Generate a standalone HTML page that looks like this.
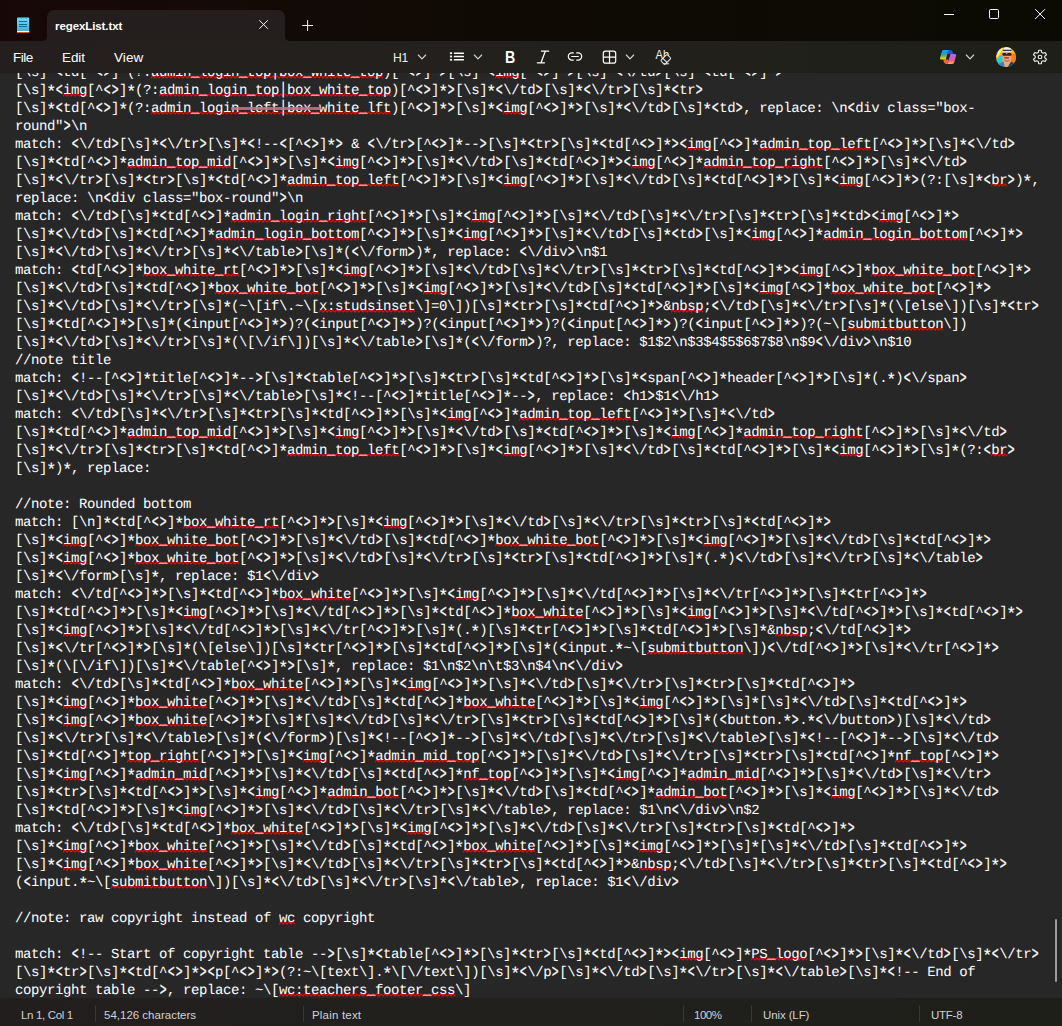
<!DOCTYPE html>
<html lang="en">
<head>
<meta charset="utf-8">
<title>regexList.txt - Notepad</title>
<style>
*{box-sizing:border-box;margin:0;padding:0}
html,body{width:1062px;height:1026px;overflow:hidden;background:#272727}
body{position:relative;font-family:"Liberation Sans",sans-serif;color:#fff}
#titlebar{position:absolute;left:0;top:0;width:1062px;height:41px;background:linear-gradient(90deg,#170807 0%,#120a06 30%,#0e0a04 60%,#0b0b03 100%)}
#tab{position:absolute;left:47px;top:10px;width:238px;height:31px;background:#241f1e;border-radius:7px 7px 0 0}
#tab:before,#tab:after{content:"";position:absolute;bottom:0;width:4px;height:4px}
#tab:before{left:-4px;background:radial-gradient(circle at 0 0,rgba(36,31,30,0) 3.5px,#241f1e 4.2px)}
#tab:after{right:-4px;background:radial-gradient(circle at 100% 0,rgba(36,31,30,0) 3.5px,#241f1e 4.2px)}
#tabtitle{position:absolute;left:8px;top:9px;font-size:11.5px;line-height:14px;font-weight:bold;letter-spacing:-0.09px;color:#fff;white-space:nowrap}
#menubar{position:absolute;left:0;top:41px;width:1062px;height:32px;background:linear-gradient(90deg,#241f1e 0%,#23201d 40%,#20201b 80%,#1f1f1a 100%)}
.mi{position:absolute;top:8px;font-size:13.5px;line-height:18px;color:#fff;white-space:nowrap}
#hdr{position:absolute;left:0;top:0;width:1062px;height:73px}
#editor{position:absolute;left:0;top:73px;width:1062px;height:925px;background:#272727;overflow:hidden}
#text{position:absolute;left:15px;top:-9px;font-family:"Liberation Mono","DejaVu Sans Mono",monospace;font-size:14px;letter-spacing:-0.4px;line-height:18px;color:#fff;text-rendering:geometricPrecision}
.ln{height:18px;white-space:pre}
.ln b{display:inline-block;width:8px;font-weight:normal;transform:scale(.82,1.25);transform-origin:50% 49%;-webkit-text-stroke:0.25px #fff}
.ln i{display:inline-block;width:8px;font-style:normal;transform:translateY(2px) scale(1.2);-webkit-text-stroke:0.15px #fff}
.ln s{display:inline-block;width:8px;text-decoration:none;transform:scaleY(1.22);transform-origin:50% 62%}
#sq{position:absolute;left:15px;top:-15px}
#status{position:absolute;left:0;top:998px;width:1062px;height:28px;background:linear-gradient(90deg,#221e1e 0%,#21201d 40%,#1f1f1b 80%,#1f1f1a 100%);font-size:11.5px;color:#d2d2d2}
#status span{position:absolute;top:10px;line-height:14px;white-space:nowrap}
#status i{position:absolute;top:8px;width:1px;height:16px;background:#3a3634}
#thumb{position:absolute;left:1055px;top:919px;width:2px;height:63px;background:#9b9b9b;border-radius:1px}
#pink{position:absolute;left:231px;top:107px;width:90px;height:3px;background:#cf6f86;opacity:.88;border-radius:1px}
</style>
</head>
<body>
<div id="titlebar">
  <div id="tab"><div id="tabtitle">regexList.txt</div></div>
</div>
<div id="menubar">
  <div class="mi" style="left:13px;letter-spacing:-0.5px">File</div>
  <div class="mi" style="left:62px;letter-spacing:-0.1px">Edit</div>
  <div class="mi" style="left:114px;letter-spacing:0.1px">View</div>
  <div class="mi" style="left:393px;letter-spacing:-0.2px;color:#eee;transform:scaleX(0.9);transform-origin:0 0">H1</div>
  <div class="mi" style="left:504.6px;top:6px;font-size:16.5px;line-height:20px;font-weight:bold;transform:scaleX(0.86);transform-origin:0 0">B</div>
</div>
<svg id="hdr" width="1062" height="73" viewBox="0 0 1062 73">
  <defs>
    <linearGradient id="npg" x1="0" y1="0" x2="0" y2="1"><stop offset="0" stop-color="#74d8f8"/><stop offset="1" stop-color="#42abd0"/></linearGradient>
    <linearGradient id="cpl" x1="0" y1="0" x2="0" y2="1"><stop offset="0" stop-color="#18a4ff"/><stop offset="0.3" stop-color="#1c98e0"/><stop offset="0.6" stop-color="#3cb878"/><stop offset="0.85" stop-color="#d8d018"/><stop offset="1" stop-color="#ffd800"/></linearGradient>
    <linearGradient id="cpr" x1="0" y1="0" x2="0" y2="1"><stop offset="0" stop-color="#b466ff"/><stop offset="0.35" stop-color="#d058c0"/><stop offset="0.65" stop-color="#f05a8c"/><stop offset="1" stop-color="#ffb25e"/></linearGradient>
    <clipPath id="avc"><circle cx="1006" cy="57.100" r="10"/></clipPath>
  </defs>
  <!-- notepad app icon -->
  <g>
    <rect x="17" y="17.6" width="12.2" height="15.4" rx="0.8" fill="url(#npg)"/>
    <rect x="17" y="31" width="12.2" height="1.1" fill="#f3f6f8"/>
    <rect x="17" y="32" width="12.2" height="1.1" fill="#c65a12"/>
    <path d="M18.200,18.300 v-1.400 h1.500 v1.400z M20.900,18.800 v-1.800 h1 v1.800z M23.200,18.300 v-1.400 h1.500 v1.400z M26,18.800 v-1.800 h1 v1.800z" fill="#1690bb"/>
    <path d="M19,21.5 h8 M19,24.5 h8 M19,26.5 h8" stroke="#006a8f" stroke-width="0.95" fill="none"/>
  </g>
  <!-- tab close / new tab -->
  <path d="M259.3,20.2 l8.6,8.6 M267.9,20.2 l-8.6,8.6" stroke="#f2f2f2" stroke-width="1" fill="none"/>
  <path d="M302.2,25.5 h10.8 M307.6,20.1 v10.8" stroke="#f2f2f2" stroke-width="1" fill="none"/>
  <!-- window controls -->
  <path d="M944,14.5 h10" stroke="#fff" stroke-width="1" fill="none"/>
  <rect x="989.5" y="9.5" width="9" height="9" rx="1.2" stroke="#fff" stroke-width="1" fill="none"/>
  <path d="M1035.2,9.2 l9.8,9.8 M1045,9.2 l-9.8,9.8" stroke="#fff" stroke-width="1" fill="none"/>
  <!-- chevrons -->
  <g stroke="#d8d8d8" stroke-width="1.1" fill="none" stroke-linecap="round" stroke-linejoin="round">
    <path d="M418.3,55 l3.7,3.8 l3.7,-3.8"/>
    <path d="M474.3,55 l3.7,3.8 l3.7,-3.8"/>
    <path d="M626.3,55 l3.7,3.8 l3.7,-3.8"/>
    <path d="M966.3,55 l3.7,3.8 l3.7,-3.8"/>
  </g>
  <!-- list icon -->
  <g fill="#fff">
    <rect x="449.9" y="52.3" width="2.2" height="1.8"/><rect x="453.8" y="52.4" width="10.2" height="1.6" rx="0.6"/>
    <rect x="449.9" y="55.6" width="2.2" height="1.8"/><rect x="453.8" y="55.7" width="10.2" height="1.6" rx="0.6"/>
    <rect x="449.9" y="58.9" width="2.2" height="1.8"/><rect x="453.8" y="59" width="10.2" height="1.6" rx="0.6"/>
  </g>
  <!-- italic I -->
  <path d="M541.5,51.2 h7.2 M537.3,62.8 h7.2 M545.3,51.2 l-4.3,11.6" stroke="#fff" stroke-width="1.25" fill="none" stroke-linecap="round"/>
  <!-- link -->
  <g stroke="#fff" stroke-width="1.2" fill="none" stroke-linecap="round">
    <path d="M573.3,52.9 H571.9 a3.6,3.6 0 0 0 0,7.2 H573.3"/>
    <path d="M576.7,52.9 H578.1 a3.6,3.6 0 0 1 0,7.2 H576.7"/>
    <path d="M571.6,56.5 H578.4"/>
  </g>
  <!-- table -->
  <g stroke="#fff" stroke-width="1.2" fill="none">
    <rect x="603.3" y="51.1" width="12.4" height="12.1" rx="2.2"/>
    <path d="M609.5,51.1 v12.1 M603.3,57.15 h12.4"/>
  </g>
  <!-- clear formatting icon -->
  <text x="655.6" y="59" font-family="Liberation Sans, sans-serif" font-size="12.5" fill="#f0f0f0" textLength="13.6" lengthAdjust="spacingAndGlyphs">Ab</text>
  <g transform="translate(665.8,59.5) rotate(-45)" stroke="#f4f4f4" stroke-width="1" stroke-linejoin="round">
    <rect x="-4.5" y="-2.9" width="9" height="5.800" rx="1.200" fill="#23201d"/>
    <path d="M-1.300,-2.900 v5.800" fill="none"/>
  </g>
  <path d="M664,63.800 h4.600" stroke="#f4f4f4" stroke-width="1" fill="none" stroke-linecap="round"/>
  <!-- copilot -->
  <g>
    <path d="M946,49.900 h3.800 c1.500,0 2.300,0.700 2.800,2 l0.700,2 h-5.500z" fill="#1c58dc"/>
    <path d="M943.2,59.500 h5.200 l-1.100,4.500 h-0.700 c-1.400,0 -2.200,-0.700 -2.700,-2z" fill="#f8642e"/>
    <path d="M943.500,49.900 h4.900 l-2.600,9.700 h-4.400 c-1.100,0 -1.600,-0.800 -1.300,-1.900 l1.700,-6 c0.300,-1.200 0.900,-1.800 1.700,-1.800z" fill="url(#cpl)"/>
    <path d="M950.600,53.900 h4.200 c1.100,0 1.600,0.800 1.300,1.900 l-1.700,6 c-0.400,1.400 -1.200,2.200 -2.400,2.200 h-4.700z" fill="url(#cpr)"/>
  </g>
  <!-- avatar -->
  <g clip-path="url(#avc)">
    <rect x="995" y="46" width="22" height="22" fill="#f7b81a"/>
    <path d="M996,56 l6,-8 l1.200,0.800 l-6.200,9z M997.500,52 l4,-5 l1,0.600 l-4,5.400z" fill="#fde6a0"/>
    <path d="M1011,55 l6,-3 v11.500 l-6,-1.500z" fill="#fb7a12"/>
    <path d="M1000.600,55 l2,1 v5.600 l-4.200,2 l-2.400,-3.200z" fill="#18cfe8"/>
    <path d="M997.500,64 l6.200,-2.400 l1.600,6.400 h-6z" fill="#2a86d8"/>
    <path d="M1011,61.500 l4,2 l-2.500,4.500 h-5.500z" fill="#123e80"/>
    <path d="M1003.600,61 h7.400 l-4,6.800 h-1.800z" fill="#f0a880"/>
    <rect x="1002.500" y="51.500" width="9" height="9.800" rx="3" fill="#e8a078"/>
    <path d="M1004.200,59.800 q2.700,1.800 5.600,0 l-0.300,1.300 q-2.500,1.500 -5,0z" fill="#9a6850"/>
    <path d="M1004.400,57.300 h4.500 v1.300 h-4.500z" fill="#8a3018"/>
    <path d="M1000.700,53.300 l2,-0.600 v1.300z" fill="#b8b0a8"/>
    <rect x="1002.300" y="53" width="9.300" height="2.800" rx="1.200" fill="#2a2030"/>
    <rect x="1006.100" y="53" width="1.300" height="1.200" fill="#e8a078"/>
    <path d="M1003,50.400 c0,-4.400 8.300,-4.400 8.300,0z" fill="#f4f4f2"/>
    <rect x="1002" y="50.900" width="10" height="1.100" rx="0.500" fill="#e8e0d8"/>
    <rect x="1002.800" y="49.700" width="8.700" height="1.300" fill="#2c3c4c"/>
  </g>
  <!-- settings gear -->
  <path d="M1041.60,52.37 L1041.32,50.23 L1038.68,50.23 L1038.40,52.37 L1036.79,53.30 L1034.79,52.47 L1033.48,54.75 L1035.19,56.07 L1035.19,57.93 L1033.48,59.25 L1034.79,61.53 L1036.79,60.70 L1038.40,61.63 L1038.68,63.77 L1041.32,63.77 L1041.60,61.63 L1043.21,60.70 L1045.21,61.53 L1046.52,59.25 L1044.81,57.93 L1044.81,56.07 L1046.52,54.75 L1045.21,52.47 L1043.21,53.30Z" stroke="#f0f0f0" stroke-width="1.1" fill="none" stroke-linejoin="round"/>
  <circle cx="1040" cy="57" r="1.800" stroke="#f0f0f0" stroke-width="1.100" fill="none"/>
</svg>
<div id="editor"><svg id="sq" width="1040" height="960" viewBox="0 0 1040 960"><defs><pattern id="zz" x="0" y="-9" width="4" height="18" patternUnits="userSpaceOnUse"><path d="M-1,12 L0,11 L2,9 L4,11 L5,10" fill="none" stroke="#ff0000" stroke-width="1.1"/></pattern></defs><g fill="url(#zz)"><rect x="136" y="16" width="232" height="5"/><rect x="480" y="16" width="24" height="5"/><rect x="48" y="34" width="24" height="5"/><rect x="144" y="34" width="232" height="5"/><rect x="136" y="52" width="240" height="5"/><rect x="488" y="52" width="24" height="5"/><rect x="672" y="88" width="24" height="5"/><rect x="744" y="88" width="112" height="5"/><rect x="112" y="106" width="104" height="5"/><rect x="320" y="106" width="24" height="5"/><rect x="616" y="106" width="24" height="5"/><rect x="688" y="106" width="120" height="5"/><rect x="272" y="124" width="112" height="5"/><rect x="488" y="124" width="24" height="5"/><rect x="824" y="124" width="24" height="5"/><rect x="976" y="124" width="16" height="5"/><rect x="216" y="160" width="136" height="5"/><rect x="456" y="160" width="24" height="5"/><rect x="864" y="160" width="24" height="5"/><rect x="200" y="178" width="144" height="5"/><rect x="448" y="178" width="24" height="5"/><rect x="736" y="178" width="24" height="5"/><rect x="808" y="178" width="144" height="5"/><rect x="128" y="214" width="96" height="5"/><rect x="328" y="214" width="24" height="5"/><rect x="784" y="214" width="24" height="5"/><rect x="856" y="214" width="104" height="5"/><rect x="200" y="232" width="104" height="5"/><rect x="408" y="232" width="24" height="5"/><rect x="744" y="232" width="24" height="5"/><rect x="816" y="232" width="104" height="5"/><rect x="304" y="250" width="96" height="5"/><rect x="656" y="250" width="32" height="5"/><rect x="832" y="268" width="96" height="5"/><rect x="432" y="358" width="24" height="5"/><rect x="504" y="358" width="112" height="5"/><rect x="112" y="376" width="104" height="5"/><rect x="320" y="376" width="24" height="5"/><rect x="656" y="376" width="24" height="5"/><rect x="728" y="376" width="120" height="5"/><rect x="272" y="394" width="112" height="5"/><rect x="488" y="394" width="24" height="5"/><rect x="824" y="394" width="24" height="5"/><rect x="976" y="394" width="16" height="5"/><rect x="168" y="466" width="96" height="5"/><rect x="368" y="466" width="24" height="5"/><rect x="48" y="484" width="24" height="5"/><rect x="120" y="484" width="104" height="5"/><rect x="480" y="484" width="104" height="5"/><rect x="688" y="484" width="24" height="5"/><rect x="48" y="502" width="24" height="5"/><rect x="120" y="502" width="104" height="5"/><rect x="264" y="538" width="72" height="5"/><rect x="440" y="538" width="24" height="5"/><rect x="168" y="556" width="24" height="5"/><rect x="496" y="556" width="72" height="5"/><rect x="672" y="556" width="24" height="5"/><rect x="48" y="574" width="24" height="5"/><rect x="760" y="574" width="32" height="5"/><rect x="632" y="592" width="96" height="5"/><rect x="216" y="628" width="72" height="5"/><rect x="392" y="628" width="24" height="5"/><rect x="48" y="646" width="24" height="5"/><rect x="120" y="646" width="72" height="5"/><rect x="448" y="646" width="72" height="5"/><rect x="624" y="646" width="24" height="5"/><rect x="48" y="664" width="24" height="5"/><rect x="120" y="664" width="72" height="5"/><rect x="112" y="700" width="72" height="5"/><rect x="288" y="700" width="24" height="5"/><rect x="360" y="700" width="104" height="5"/><rect x="880" y="700" width="48" height="5"/><rect x="48" y="718" width="24" height="5"/><rect x="120" y="718" width="72" height="5"/><rect x="448" y="718" width="48" height="5"/><rect x="600" y="718" width="24" height="5"/><rect x="672" y="718" width="72" height="5"/><rect x="240" y="736" width="24" height="5"/><rect x="312" y="736" width="72" height="5"/><rect x="640" y="736" width="72" height="5"/><rect x="816" y="736" width="24" height="5"/><rect x="168" y="754" width="24" height="5"/><rect x="216" y="772" width="72" height="5"/><rect x="392" y="772" width="24" height="5"/><rect x="48" y="790" width="24" height="5"/><rect x="120" y="790" width="72" height="5"/><rect x="448" y="790" width="72" height="5"/><rect x="624" y="790" width="24" height="5"/><rect x="48" y="808" width="24" height="5"/><rect x="120" y="808" width="72" height="5"/><rect x="624" y="808" width="32" height="5"/><rect x="96" y="826" width="96" height="5"/><rect x="264" y="862" width="16" height="5"/><rect x="664" y="898" width="24" height="5"/><rect x="736" y="898" width="56" height="5"/><rect x="264" y="934" width="176" height="5"/></g></svg><div id="text"><div class="ln">[\s]<i>*</i><b>&lt;</b>td[^<b>&lt;</b><b>&gt;</b>]<i>*</i>(?:admin_login_top<s>|</s>box_white_top)[^<b>&lt;</b><b>&gt;</b>]<i>*</i><b>&gt;</b>[\s]<i>*</i><b>&lt;</b>img[^<b>&lt;</b><b>&gt;</b>]<i>*</i><b>&gt;</b>[\s]<i>*</i><b>&lt;</b>\/td<b>&gt;</b>[\s]<i>*</i><b>&lt;</b>td[^<b>&lt;</b><b>&gt;</b>]<i>*</i><b>&gt;</b></div>
<div class="ln">[\s]<i>*</i><b>&lt;</b>img[^<b>&lt;</b><b>&gt;</b>]<i>*</i>(?:admin_login_top<s>|</s>box_white_top)[^<b>&lt;</b><b>&gt;</b>]<i>*</i><b>&gt;</b>[\s]<i>*</i><b>&lt;</b>\/td<b>&gt;</b>[\s]<i>*</i><b>&lt;</b>\/tr<b>&gt;</b>[\s]<i>*</i><b>&lt;</b>tr<b>&gt;</b></div>
<div class="ln">[\s]<i>*</i><b>&lt;</b>td[^<b>&lt;</b><b>&gt;</b>]<i>*</i>(?:admin_login_left<s>|</s>box_white_lft)[^<b>&lt;</b><b>&gt;</b>]<i>*</i><b>&gt;</b>[\s]<i>*</i><b>&lt;</b>img[^<b>&lt;</b><b>&gt;</b>]<i>*</i><b>&gt;</b>[\s]<i>*</i><b>&lt;</b>\/td<b>&gt;</b>[\s]<i>*</i><b>&lt;</b>td<b>&gt;</b>, replace: \n<b>&lt;</b>div class="box-</div>
<div class="ln">round"<b>&gt;</b>\n</div>
<div class="ln">match: <b>&lt;</b>\/td<b>&gt;</b>[\s]<i>*</i><b>&lt;</b>\/tr<b>&gt;</b>[\s]<i>*</i><b>&lt;</b>!--<b>&lt;</b>[^<b>&lt;</b><b>&gt;</b>]<i>*</i><b>&gt;</b> &amp; <b>&lt;</b>\/tr<b>&gt;</b>[^<b>&lt;</b><b>&gt;</b>]<i>*</i>--<b>&gt;</b>[\s]<i>*</i><b>&lt;</b>tr<b>&gt;</b>[\s]<i>*</i><b>&lt;</b>td[^<b>&lt;</b><b>&gt;</b>]<i>*</i><b>&gt;</b><b>&lt;</b>img[^<b>&lt;</b><b>&gt;</b>]<i>*</i>admin_top_left[^<b>&lt;</b><b>&gt;</b>]<i>*</i><b>&gt;</b>[\s]<i>*</i><b>&lt;</b>\/td<b>&gt;</b></div>
<div class="ln">[\s]<i>*</i><b>&lt;</b>td[^<b>&lt;</b><b>&gt;</b>]<i>*</i>admin_top_mid[^<b>&lt;</b><b>&gt;</b>]<i>*</i><b>&gt;</b>[\s]<i>*</i><b>&lt;</b>img[^<b>&lt;</b><b>&gt;</b>]<i>*</i><b>&gt;</b>[\s]<i>*</i><b>&lt;</b>\/td<b>&gt;</b>[\s]<i>*</i><b>&lt;</b>td[^<b>&lt;</b><b>&gt;</b>]<i>*</i><b>&gt;</b><b>&lt;</b>img[^<b>&lt;</b><b>&gt;</b>]<i>*</i>admin_top_right[^<b>&lt;</b><b>&gt;</b>]<i>*</i><b>&gt;</b>[\s]<i>*</i><b>&lt;</b>\/td<b>&gt;</b></div>
<div class="ln">[\s]<i>*</i><b>&lt;</b>\/tr<b>&gt;</b>[\s]<i>*</i><b>&lt;</b>tr<b>&gt;</b>[\s]<i>*</i><b>&lt;</b>td[^<b>&lt;</b><b>&gt;</b>]<i>*</i>admin_top_left[^<b>&lt;</b><b>&gt;</b>]<i>*</i><b>&gt;</b>[\s]<i>*</i><b>&lt;</b>img[^<b>&lt;</b><b>&gt;</b>]<i>*</i><b>&gt;</b>[\s]<i>*</i><b>&lt;</b>\/td<b>&gt;</b>[\s]<i>*</i><b>&lt;</b>td[^<b>&lt;</b><b>&gt;</b>]<i>*</i><b>&gt;</b>[\s]<i>*</i><b>&lt;</b>img[^<b>&lt;</b><b>&gt;</b>]<i>*</i><b>&gt;</b>(?:[\s]<i>*</i><b>&lt;</b>br<b>&gt;</b>)<i>*</i>,</div>
<div class="ln">replace: \n<b>&lt;</b>div class="box-round"<b>&gt;</b>\n</div>
<div class="ln">match: <b>&lt;</b>\/td<b>&gt;</b>[\s]<i>*</i><b>&lt;</b>td[^<b>&lt;</b><b>&gt;</b>]<i>*</i>admin_login_right[^<b>&lt;</b><b>&gt;</b>]<i>*</i><b>&gt;</b>[\s]<i>*</i><b>&lt;</b>img[^<b>&lt;</b><b>&gt;</b>]<i>*</i><b>&gt;</b>[\s]<i>*</i><b>&lt;</b>\/td<b>&gt;</b>[\s]<i>*</i><b>&lt;</b>\/tr<b>&gt;</b>[\s]<i>*</i><b>&lt;</b>tr<b>&gt;</b>[\s]<i>*</i><b>&lt;</b>td<b>&gt;</b><b>&lt;</b>img[^<b>&lt;</b><b>&gt;</b>]<i>*</i><b>&gt;</b></div>
<div class="ln">[\s]<i>*</i><b>&lt;</b>\/td<b>&gt;</b>[\s]<i>*</i><b>&lt;</b>td[^<b>&lt;</b><b>&gt;</b>]<i>*</i>admin_login_bottom[^<b>&lt;</b><b>&gt;</b>]<i>*</i><b>&gt;</b>[\s]<i>*</i><b>&lt;</b>img[^<b>&lt;</b><b>&gt;</b>]<i>*</i><b>&gt;</b>[\s]<i>*</i><b>&lt;</b>\/td<b>&gt;</b>[\s]<i>*</i><b>&lt;</b>td<b>&gt;</b>[\s]<i>*</i><b>&lt;</b>img[^<b>&lt;</b><b>&gt;</b>]<i>*</i>admin_login_bottom[^<b>&lt;</b><b>&gt;</b>]<i>*</i><b>&gt;</b></div>
<div class="ln">[\s]<i>*</i><b>&lt;</b>\/td<b>&gt;</b>[\s]<i>*</i><b>&lt;</b>\/tr<b>&gt;</b>[\s]<i>*</i><b>&lt;</b>\/table<b>&gt;</b>[\s]<i>*</i>(<b>&lt;</b>\/form<b>&gt;</b>)<i>*</i>, replace: <b>&lt;</b>\/div<b>&gt;</b>\n$1</div>
<div class="ln">match: <b>&lt;</b>td[^<b>&lt;</b><b>&gt;</b>]<i>*</i>box_white_rt[^<b>&lt;</b><b>&gt;</b>]<i>*</i><b>&gt;</b>[\s]<i>*</i><b>&lt;</b>img[^<b>&lt;</b><b>&gt;</b>]<i>*</i><b>&gt;</b>[\s]<i>*</i><b>&lt;</b>\/td<b>&gt;</b>[\s]<i>*</i><b>&lt;</b>\/tr<b>&gt;</b>[\s]<i>*</i><b>&lt;</b>tr<b>&gt;</b>[\s]<i>*</i><b>&lt;</b>td[^<b>&lt;</b><b>&gt;</b>]<i>*</i><b>&gt;</b><b>&lt;</b>img[^<b>&lt;</b><b>&gt;</b>]<i>*</i>box_white_bot[^<b>&lt;</b><b>&gt;</b>]<i>*</i><b>&gt;</b></div>
<div class="ln">[\s]<i>*</i><b>&lt;</b>\/td<b>&gt;</b>[\s]<i>*</i><b>&lt;</b>td[^<b>&lt;</b><b>&gt;</b>]<i>*</i>box_white_bot[^<b>&lt;</b><b>&gt;</b>]<i>*</i><b>&gt;</b>[\s]<i>*</i><b>&lt;</b>img[^<b>&lt;</b><b>&gt;</b>]<i>*</i><b>&gt;</b>[\s]<i>*</i><b>&lt;</b>\/td<b>&gt;</b>[\s]<i>*</i><b>&lt;</b>td[^<b>&lt;</b><b>&gt;</b>]<i>*</i><b>&gt;</b>[\s]<i>*</i><b>&lt;</b>img[^<b>&lt;</b><b>&gt;</b>]<i>*</i>box_white_bot[^<b>&lt;</b><b>&gt;</b>]<i>*</i><b>&gt;</b></div>
<div class="ln">[\s]<i>*</i><b>&lt;</b>\/td<b>&gt;</b>[\s]<i>*</i><b>&lt;</b>\/tr<b>&gt;</b>[\s]<i>*</i>(~\[if\.~\[x:studsinset\]=0\])[\s]<i>*</i><b>&lt;</b>tr<b>&gt;</b>[\s]<i>*</i><b>&lt;</b>td[^<b>&lt;</b><b>&gt;</b>]<i>*</i><b>&gt;</b>&amp;nbsp;<b>&lt;</b>\/td<b>&gt;</b>[\s]<i>*</i><b>&lt;</b>\/tr<b>&gt;</b>[\s]<i>*</i>(\[else\])[\s]<i>*</i><b>&lt;</b>tr<b>&gt;</b></div>
<div class="ln">[\s]<i>*</i><b>&lt;</b>td[^<b>&lt;</b><b>&gt;</b>]<i>*</i><b>&gt;</b>[\s]<i>*</i>(<b>&lt;</b>input[^<b>&lt;</b><b>&gt;</b>]<i>*</i><b>&gt;</b>)?(<b>&lt;</b>input[^<b>&lt;</b><b>&gt;</b>]<i>*</i><b>&gt;</b>)?(<b>&lt;</b>input[^<b>&lt;</b><b>&gt;</b>]<i>*</i><b>&gt;</b>)?(<b>&lt;</b>input[^<b>&lt;</b><b>&gt;</b>]<i>*</i><b>&gt;</b>)?(<b>&lt;</b>input[^<b>&lt;</b><b>&gt;</b>]<i>*</i><b>&gt;</b>)?(~\[submitbutton\])</div>
<div class="ln">[\s]<i>*</i><b>&lt;</b>\/td<b>&gt;</b>[\s]<i>*</i><b>&lt;</b>\/tr<b>&gt;</b>[\s]<i>*</i>(\[\/if\])[\s]<i>*</i><b>&lt;</b>\/table<b>&gt;</b>[\s]<i>*</i>(<b>&lt;</b>\/form<b>&gt;</b>)?, replace: $1$2\n$3$4$5$6$7$8\n$9<b>&lt;</b>\/div<b>&gt;</b>\n$10</div>
<div class="ln">//note title</div>
<div class="ln">match: <b>&lt;</b>!--[^<b>&lt;</b><b>&gt;</b>]<i>*</i>title[^<b>&lt;</b><b>&gt;</b>]<i>*</i>--<b>&gt;</b>[\s]<i>*</i><b>&lt;</b>table[^<b>&lt;</b><b>&gt;</b>]<i>*</i><b>&gt;</b>[\s]<i>*</i><b>&lt;</b>tr<b>&gt;</b>[\s]<i>*</i><b>&lt;</b>td[^<b>&lt;</b><b>&gt;</b>]<i>*</i><b>&gt;</b>[\s]<i>*</i><b>&lt;</b>span[^<b>&lt;</b><b>&gt;</b>]<i>*</i>header[^<b>&lt;</b><b>&gt;</b>]<i>*</i><b>&gt;</b>[\s]<i>*</i>(.<i>*</i>)<b>&lt;</b>\/span<b>&gt;</b></div>
<div class="ln">[\s]<i>*</i><b>&lt;</b>\/td<b>&gt;</b>[\s]<i>*</i><b>&lt;</b>\/tr<b>&gt;</b>[\s]<i>*</i><b>&lt;</b>\/table<b>&gt;</b>[\s]<i>*</i><b>&lt;</b>!--[^<b>&lt;</b><b>&gt;</b>]<i>*</i>title[^<b>&lt;</b><b>&gt;</b>]<i>*</i>--<b>&gt;</b>, replace: <b>&lt;</b>h1<b>&gt;</b>$1<b>&lt;</b>\/h1<b>&gt;</b></div>
<div class="ln">match: <b>&lt;</b>\/td<b>&gt;</b>[\s]<i>*</i><b>&lt;</b>\/tr<b>&gt;</b>[\s]<i>*</i><b>&lt;</b>tr<b>&gt;</b>[\s]<i>*</i><b>&lt;</b>td[^<b>&lt;</b><b>&gt;</b>]<i>*</i><b>&gt;</b>[\s]<i>*</i><b>&lt;</b>img[^<b>&lt;</b><b>&gt;</b>]<i>*</i>admin_top_left[^<b>&lt;</b><b>&gt;</b>]<i>*</i><b>&gt;</b>[\s]<i>*</i><b>&lt;</b>\/td<b>&gt;</b></div>
<div class="ln">[\s]<i>*</i><b>&lt;</b>td[^<b>&lt;</b><b>&gt;</b>]<i>*</i>admin_top_mid[^<b>&lt;</b><b>&gt;</b>]<i>*</i><b>&gt;</b>[\s]<i>*</i><b>&lt;</b>img[^<b>&lt;</b><b>&gt;</b>]<i>*</i><b>&gt;</b>[\s]<i>*</i><b>&lt;</b>\/td<b>&gt;</b>[\s]<i>*</i><b>&lt;</b>td[^<b>&lt;</b><b>&gt;</b>]<i>*</i><b>&gt;</b>[\s]<i>*</i><b>&lt;</b>img[^<b>&lt;</b><b>&gt;</b>]<i>*</i>admin_top_right[^<b>&lt;</b><b>&gt;</b>]<i>*</i><b>&gt;</b>[\s]<i>*</i><b>&lt;</b>\/td<b>&gt;</b></div>
<div class="ln">[\s]<i>*</i><b>&lt;</b>\/tr<b>&gt;</b>[\s]<i>*</i><b>&lt;</b>tr<b>&gt;</b>[\s]<i>*</i><b>&lt;</b>td[^<b>&lt;</b><b>&gt;</b>]<i>*</i>admin_top_left[^<b>&lt;</b><b>&gt;</b>]<i>*</i><b>&gt;</b>[\s]<i>*</i><b>&lt;</b>img[^<b>&lt;</b><b>&gt;</b>]<i>*</i><b>&gt;</b>[\s]<i>*</i><b>&lt;</b>\/td<b>&gt;</b>[\s]<i>*</i><b>&lt;</b>td[^<b>&lt;</b><b>&gt;</b>]<i>*</i><b>&gt;</b>[\s]<i>*</i><b>&lt;</b>img[^<b>&lt;</b><b>&gt;</b>]<i>*</i><b>&gt;</b>[\s]<i>*</i>(?:<b>&lt;</b>br<b>&gt;</b></div>
<div class="ln">[\s]<i>*</i>)<i>*</i>, replace: </div>
<div class="ln">&nbsp;</div>
<div class="ln">//note: Rounded bottom</div>
<div class="ln">match: [\n]<i>*</i><b>&lt;</b>td[^<b>&lt;</b><b>&gt;</b>]<i>*</i>box_white_rt[^<b>&lt;</b><b>&gt;</b>]<i>*</i><b>&gt;</b>[\s]<i>*</i><b>&lt;</b>img[^<b>&lt;</b><b>&gt;</b>]<i>*</i><b>&gt;</b>[\s]<i>*</i><b>&lt;</b>\/td<b>&gt;</b>[\s]<i>*</i><b>&lt;</b>\/tr<b>&gt;</b>[\s]<i>*</i><b>&lt;</b>tr<b>&gt;</b>[\s]<i>*</i><b>&lt;</b>td[^<b>&lt;</b><b>&gt;</b>]<i>*</i><b>&gt;</b></div>
<div class="ln">[\s]<i>*</i><b>&lt;</b>img[^<b>&lt;</b><b>&gt;</b>]<i>*</i>box_white_bot[^<b>&lt;</b><b>&gt;</b>]<i>*</i><b>&gt;</b>[\s]<i>*</i><b>&lt;</b>\/td<b>&gt;</b>[\s]<i>*</i><b>&lt;</b>td[^<b>&lt;</b><b>&gt;</b>]<i>*</i>box_white_bot[^<b>&lt;</b><b>&gt;</b>]<i>*</i><b>&gt;</b>[\s]<i>*</i><b>&lt;</b>img[^<b>&lt;</b><b>&gt;</b>]<i>*</i><b>&gt;</b>[\s]<i>*</i><b>&lt;</b>\/td<b>&gt;</b>[\s]<i>*</i><b>&lt;</b>td[^<b>&lt;</b><b>&gt;</b>]<i>*</i><b>&gt;</b></div>
<div class="ln">[\s]<i>*</i><b>&lt;</b>img[^<b>&lt;</b><b>&gt;</b>]<i>*</i>box_white_bot[^<b>&lt;</b><b>&gt;</b>]<i>*</i><b>&gt;</b>[\s]<i>*</i><b>&lt;</b>\/td<b>&gt;</b>[\s]<i>*</i><b>&lt;</b>\/tr<b>&gt;</b>[\s]<i>*</i><b>&lt;</b>tr<b>&gt;</b>[\s]<i>*</i><b>&lt;</b>td[^<b>&lt;</b><b>&gt;</b>]<i>*</i><b>&gt;</b>[\s]<i>*</i>(.<i>*</i>)<b>&lt;</b>\/td<b>&gt;</b>[\s]<i>*</i><b>&lt;</b>\/tr<b>&gt;</b>[\s]<i>*</i><b>&lt;</b>\/table<b>&gt;</b></div>
<div class="ln">[\s]<i>*</i><b>&lt;</b>\/form<b>&gt;</b>[\s]<i>*</i>, replace: $1<b>&lt;</b>\/div<b>&gt;</b></div>
<div class="ln">match: <b>&lt;</b>\/td[^<b>&lt;</b><b>&gt;</b>]<i>*</i><b>&gt;</b>[\s]<i>*</i><b>&lt;</b>td[^<b>&lt;</b><b>&gt;</b>]<i>*</i>box_white[^<b>&lt;</b><b>&gt;</b>]<i>*</i><b>&gt;</b>[\s]<i>*</i><b>&lt;</b>img[^<b>&lt;</b><b>&gt;</b>]<i>*</i><b>&gt;</b>[\s]<i>*</i><b>&lt;</b>\/td[^<b>&lt;</b><b>&gt;</b>]<i>*</i><b>&gt;</b>[\s]<i>*</i><b>&lt;</b>\/tr[^<b>&lt;</b><b>&gt;</b>]<i>*</i><b>&gt;</b>[\s]<i>*</i><b>&lt;</b>tr[^<b>&lt;</b><b>&gt;</b>]<i>*</i><b>&gt;</b></div>
<div class="ln">[\s]<i>*</i><b>&lt;</b>td[^<b>&lt;</b><b>&gt;</b>]<i>*</i><b>&gt;</b>[\s]<i>*</i><b>&lt;</b>img[^<b>&lt;</b><b>&gt;</b>]<i>*</i><b>&gt;</b>[\s]<i>*</i><b>&lt;</b>\/td[^<b>&lt;</b><b>&gt;</b>]<i>*</i><b>&gt;</b>[\s]<i>*</i><b>&lt;</b>td[^<b>&lt;</b><b>&gt;</b>]<i>*</i>box_white[^<b>&lt;</b><b>&gt;</b>]<i>*</i><b>&gt;</b>[\s]<i>*</i><b>&lt;</b>img[^<b>&lt;</b><b>&gt;</b>]<i>*</i><b>&gt;</b>[\s]<i>*</i><b>&lt;</b>\/td[^<b>&lt;</b><b>&gt;</b>]<i>*</i><b>&gt;</b>[\s]<i>*</i><b>&lt;</b>td[^<b>&lt;</b><b>&gt;</b>]<i>*</i><b>&gt;</b></div>
<div class="ln">[\s]<i>*</i><b>&lt;</b>img[^<b>&lt;</b><b>&gt;</b>]<i>*</i><b>&gt;</b>[\s]<i>*</i><b>&lt;</b>\/td[^<b>&lt;</b><b>&gt;</b>]<i>*</i><b>&gt;</b>[\s]<i>*</i><b>&lt;</b>\/tr[^<b>&lt;</b><b>&gt;</b>]<i>*</i><b>&gt;</b>[\s]<i>*</i>(.<i>*</i>)[\s]<i>*</i><b>&lt;</b>tr[^<b>&lt;</b><b>&gt;</b>]<i>*</i><b>&gt;</b>[\s]<i>*</i><b>&lt;</b>td[^<b>&lt;</b><b>&gt;</b>]<i>*</i><b>&gt;</b>[\s]<i>*</i>&amp;nbsp;<b>&lt;</b>\/td[^<b>&lt;</b><b>&gt;</b>]<i>*</i><b>&gt;</b></div>
<div class="ln">[\s]<i>*</i><b>&lt;</b>\/tr[^<b>&lt;</b><b>&gt;</b>]<i>*</i><b>&gt;</b>[\s]<i>*</i>(\[else\])[\s]<i>*</i><b>&lt;</b>tr[^<b>&lt;</b><b>&gt;</b>]<i>*</i><b>&gt;</b>[\s]<i>*</i><b>&lt;</b>td[^<b>&lt;</b><b>&gt;</b>]<i>*</i><b>&gt;</b>[\s]<i>*</i>(<b>&lt;</b>input.<i>*</i>~\[submitbutton\])<b>&lt;</b>\/td[^<b>&lt;</b><b>&gt;</b>]<i>*</i><b>&gt;</b>[\s]<i>*</i><b>&lt;</b>\/tr[^<b>&lt;</b><b>&gt;</b>]<i>*</i><b>&gt;</b></div>
<div class="ln">[\s]<i>*</i>(\[\/if\])[\s]<i>*</i><b>&lt;</b>\/table[^<b>&lt;</b><b>&gt;</b>]<i>*</i><b>&gt;</b>[\s]<i>*</i>, replace: $1\n$2\n\t$3\n$4\n<b>&lt;</b>\/div<b>&gt;</b></div>
<div class="ln">match: <b>&lt;</b>\/td<b>&gt;</b>[\s]<i>*</i><b>&lt;</b>td[^<b>&lt;</b><b>&gt;</b>]<i>*</i>box_white[^<b>&lt;</b><b>&gt;</b>]<i>*</i><b>&gt;</b>[\s]<i>*</i><b>&lt;</b>img[^<b>&lt;</b><b>&gt;</b>]<i>*</i><b>&gt;</b>[\s]<i>*</i><b>&lt;</b>\/td<b>&gt;</b>[\s]<i>*</i><b>&lt;</b>\/tr<b>&gt;</b>[\s]<i>*</i><b>&lt;</b>tr<b>&gt;</b>[\s]<i>*</i><b>&lt;</b>td[^<b>&lt;</b><b>&gt;</b>]<i>*</i><b>&gt;</b></div>
<div class="ln">[\s]<i>*</i><b>&lt;</b>img[^<b>&lt;</b><b>&gt;</b>]<i>*</i>box_white[^<b>&lt;</b><b>&gt;</b>]<i>*</i><b>&gt;</b>[\s]<i>*</i><b>&lt;</b>\/td<b>&gt;</b>[\s]<i>*</i><b>&lt;</b>td[^<b>&lt;</b><b>&gt;</b>]<i>*</i>box_white[^<b>&lt;</b><b>&gt;</b>]<i>*</i><b>&gt;</b>[\s]<i>*</i><b>&lt;</b>img[^<b>&lt;</b><b>&gt;</b>]<i>*</i><b>&gt;</b>[\s]<i>*</i>[\s]<i>*</i><b>&lt;</b>\/td<b>&gt;</b>[\s]<i>*</i><b>&lt;</b>td[^<b>&lt;</b><b>&gt;</b>]<i>*</i><b>&gt;</b></div>
<div class="ln">[\s]<i>*</i><b>&lt;</b>img[^<b>&lt;</b><b>&gt;</b>]<i>*</i>box_white[^<b>&lt;</b><b>&gt;</b>]<i>*</i><b>&gt;</b>[\s]<i>*</i>[\s]<i>*</i><b>&lt;</b>\/td<b>&gt;</b>[\s]<i>*</i><b>&lt;</b>\/tr<b>&gt;</b>[\s]<i>*</i><b>&lt;</b>tr<b>&gt;</b>[\s]<i>*</i><b>&lt;</b>td[^<b>&lt;</b><b>&gt;</b>]<i>*</i><b>&gt;</b>[\s]<i>*</i>(<b>&lt;</b>button.<i>*</i><b>&gt;</b>.<i>*</i><b>&lt;</b>\/button<b>&gt;</b>)[\s]<i>*</i><b>&lt;</b>\/td<b>&gt;</b></div>
<div class="ln">[\s]<i>*</i><b>&lt;</b>\/tr<b>&gt;</b>[\s]<i>*</i><b>&lt;</b>\/table<b>&gt;</b>[\s]<i>*</i>(<b>&lt;</b>\/form<b>&gt;</b>)[\s]<i>*</i><b>&lt;</b>!--[^<b>&lt;</b><b>&gt;</b>]<i>*</i>--<b>&gt;</b>[\s]<i>*</i><b>&lt;</b>\/td<b>&gt;</b>[\s]<i>*</i><b>&lt;</b>\/tr<b>&gt;</b>[\s]<i>*</i><b>&lt;</b>\/table<b>&gt;</b>[\s]<i>*</i><b>&lt;</b>!--[^<b>&lt;</b><b>&gt;</b>]<i>*</i>--<b>&gt;</b>[\s]<i>*</i><b>&lt;</b>\/td<b>&gt;</b></div>
<div class="ln">[\s]<i>*</i><b>&lt;</b>td[^<b>&lt;</b><b>&gt;</b>]<i>*</i>top_right[^<b>&lt;</b><b>&gt;</b>]<i>*</i><b>&gt;</b>[\s]<i>*</i><b>&lt;</b>img[^<b>&lt;</b><b>&gt;</b>]<i>*</i>admin_mid_top[^<b>&lt;</b><b>&gt;</b>]<i>*</i><b>&gt;</b>[\s]<i>*</i><b>&lt;</b>\/td<b>&gt;</b>[\s]<i>*</i><b>&lt;</b>\/tr<b>&gt;</b>[\s]<i>*</i><b>&lt;</b>tr<b>&gt;</b>[\s]<i>*</i><b>&lt;</b>td[^<b>&lt;</b><b>&gt;</b>]<i>*</i>nf_top[^<b>&lt;</b><b>&gt;</b>]<i>*</i><b>&gt;</b></div>
<div class="ln">[\s]<i>*</i><b>&lt;</b>img[^<b>&lt;</b><b>&gt;</b>]<i>*</i>admin_mid[^<b>&lt;</b><b>&gt;</b>]<i>*</i><b>&gt;</b>[\s]<i>*</i><b>&lt;</b>\/td<b>&gt;</b>[\s]<i>*</i><b>&lt;</b>td[^<b>&lt;</b><b>&gt;</b>]<i>*</i>nf_top[^<b>&lt;</b><b>&gt;</b>]<i>*</i><b>&gt;</b>[\s]<i>*</i><b>&lt;</b>img[^<b>&lt;</b><b>&gt;</b>]<i>*</i>admin_mid[^<b>&lt;</b><b>&gt;</b>]<i>*</i><b>&gt;</b>[\s]<i>*</i><b>&lt;</b>\/td<b>&gt;</b>[\s]<i>*</i><b>&lt;</b>\/tr<b>&gt;</b></div>
<div class="ln">[\s]<i>*</i><b>&lt;</b>tr<b>&gt;</b>[\s]<i>*</i><b>&lt;</b>td[^<b>&lt;</b><b>&gt;</b>]<i>*</i><b>&gt;</b>[\s]<i>*</i><b>&lt;</b>img[^<b>&lt;</b><b>&gt;</b>]<i>*</i>admin_bot[^<b>&lt;</b><b>&gt;</b>]<i>*</i><b>&gt;</b>[\s]<i>*</i><b>&lt;</b>\/td<b>&gt;</b>[\s]<i>*</i><b>&lt;</b>td[^<b>&lt;</b><b>&gt;</b>]<i>*</i>admin_bot[^<b>&lt;</b><b>&gt;</b>]<i>*</i><b>&gt;</b>[\s]<i>*</i><b>&lt;</b>img[^<b>&lt;</b><b>&gt;</b>]<i>*</i><b>&gt;</b>[\s]<i>*</i><b>&lt;</b>\/td<b>&gt;</b></div>
<div class="ln">[\s]<i>*</i><b>&lt;</b>td[^<b>&lt;</b><b>&gt;</b>]<i>*</i><b>&gt;</b>[\s]<i>*</i><b>&lt;</b>img[^<b>&lt;</b><b>&gt;</b>]<i>*</i><b>&gt;</b>[\s]<i>*</i><b>&lt;</b>\/td<b>&gt;</b>[\s]<i>*</i><b>&lt;</b>\/tr<b>&gt;</b>[\s]<i>*</i><b>&lt;</b>\/table<b>&gt;</b>, replace: $1\n<b>&lt;</b>\/div<b>&gt;</b>\n$2</div>
<div class="ln">match: <b>&lt;</b>\/td<b>&gt;</b>[\s]<i>*</i><b>&lt;</b>td[^<b>&lt;</b><b>&gt;</b>]<i>*</i>box_white[^<b>&lt;</b><b>&gt;</b>]<i>*</i><b>&gt;</b>[\s]<i>*</i><b>&lt;</b>img[^<b>&lt;</b><b>&gt;</b>]<i>*</i><b>&gt;</b>[\s]<i>*</i><b>&lt;</b>\/td<b>&gt;</b>[\s]<i>*</i><b>&lt;</b>\/tr<b>&gt;</b>[\s]<i>*</i><b>&lt;</b>tr<b>&gt;</b>[\s]<i>*</i><b>&lt;</b>td[^<b>&lt;</b><b>&gt;</b>]<i>*</i><b>&gt;</b></div>
<div class="ln">[\s]<i>*</i><b>&lt;</b>img[^<b>&lt;</b><b>&gt;</b>]<i>*</i>box_white[^<b>&lt;</b><b>&gt;</b>]<i>*</i><b>&gt;</b>[\s]<i>*</i><b>&lt;</b>\/td<b>&gt;</b>[\s]<i>*</i><b>&lt;</b>td[^<b>&lt;</b><b>&gt;</b>]<i>*</i>box_white[^<b>&lt;</b><b>&gt;</b>]<i>*</i><b>&gt;</b>[\s]<i>*</i><b>&lt;</b>img[^<b>&lt;</b><b>&gt;</b>]<i>*</i><b>&gt;</b>[\s]<i>*</i>[\s]<i>*</i><b>&lt;</b>\/td<b>&gt;</b>[\s]<i>*</i><b>&lt;</b>td[^<b>&lt;</b><b>&gt;</b>]<i>*</i><b>&gt;</b></div>
<div class="ln">[\s]<i>*</i><b>&lt;</b>img[^<b>&lt;</b><b>&gt;</b>]<i>*</i>box_white[^<b>&lt;</b><b>&gt;</b>]<i>*</i><b>&gt;</b>[\s]<i>*</i><b>&lt;</b>\/td<b>&gt;</b>[\s]<i>*</i><b>&lt;</b>\/tr<b>&gt;</b>[\s]<i>*</i><b>&lt;</b>tr<b>&gt;</b>[\s]<i>*</i><b>&lt;</b>td[^<b>&lt;</b><b>&gt;</b>]<i>*</i><b>&gt;</b>&amp;nbsp;<b>&lt;</b>\/td<b>&gt;</b>[\s]<i>*</i><b>&lt;</b>\/tr<b>&gt;</b>[\s]<i>*</i><b>&lt;</b>tr<b>&gt;</b>[\s]<i>*</i><b>&lt;</b>td[^<b>&lt;</b><b>&gt;</b>]<i>*</i><b>&gt;</b></div>
<div class="ln">(<b>&lt;</b>input.<i>*</i>~\[submitbutton\])[\s]<i>*</i><b>&lt;</b>\/td<b>&gt;</b>[\s]<i>*</i><b>&lt;</b>\/tr<b>&gt;</b>[\s]<i>*</i><b>&lt;</b>\/table<b>&gt;</b>, replace: $1<b>&lt;</b>\/div<b>&gt;</b></div>
<div class="ln">&nbsp;</div>
<div class="ln">//note: raw copyright instead of wc copyright</div>
<div class="ln">&nbsp;</div>
<div class="ln">match: <b>&lt;</b>!-- Start of copyright table --<b>&gt;</b>[\s]<i>*</i><b>&lt;</b>table[^<b>&lt;</b><b>&gt;</b>]<i>*</i><b>&gt;</b>[\s]<i>*</i><b>&lt;</b>tr<b>&gt;</b>[\s]<i>*</i><b>&lt;</b>td[^<b>&lt;</b><b>&gt;</b>]<i>*</i><b>&gt;</b><b>&lt;</b>img[^<b>&lt;</b><b>&gt;</b>]<i>*</i>PS_logo[^<b>&lt;</b><b>&gt;</b>]<i>*</i><b>&gt;</b>[\s]<i>*</i><b>&lt;</b>\/td<b>&gt;</b>[\s]<i>*</i><b>&lt;</b>\/tr<b>&gt;</b></div>
<div class="ln">[\s]<i>*</i><b>&lt;</b>tr<b>&gt;</b>[\s]<i>*</i><b>&lt;</b>td[^<b>&lt;</b><b>&gt;</b>]<i>*</i><b>&gt;</b><b>&lt;</b>p[^<b>&lt;</b><b>&gt;</b>]<i>*</i><b>&gt;</b>(?:~\[text\].<i>*</i>\[\/text\])[\s]<i>*</i><b>&lt;</b>\/p<b>&gt;</b>[\s]<i>*</i><b>&lt;</b>\/td<b>&gt;</b>[\s]<i>*</i><b>&lt;</b>\/tr<b>&gt;</b>[\s]<i>*</i><b>&lt;</b>\/table<b>&gt;</b>[\s]<i>*</i><b>&lt;</b>!-- End of</div>
<div class="ln">copyright table --<b>&gt;</b>, replace: ~\[wc:teachers_footer_css\]</div></div></div>
<div id="pink"></div>
<div id="thumb"></div>
<div id="status">
  <span style="left:21px;letter-spacing:-0.34px">Ln 1, Col 1</span><i style="left:95px"></i>
  <span style="left:104px">54,126 characters</span><i style="left:303px"></i>
  <span style="left:312px;letter-spacing:0.19px">Plain text</span><i style="left:683px"></i>
  <span style="left:694px;letter-spacing:-0.47px">100%</span><i style="left:751px"></i>
  <span style="left:763px;letter-spacing:-0.11px">Unix (LF)</span><i style="left:919px"></i>
  <span style="left:931px;letter-spacing:-0.25px">UTF-8</span>
</div>
</body>
</html>
